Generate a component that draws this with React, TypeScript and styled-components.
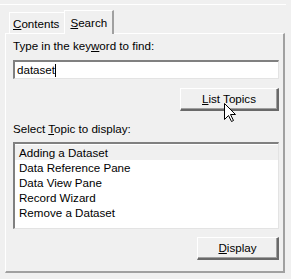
import React from "react";
import styled, { createGlobalStyle } from "styled-components";

const Global = createGlobalStyle`
  html, body { margin: 0; padding: 0; background: #f0f0f0; }
  body { font-family: "Liberation Sans", Arial, sans-serif; font-size: 11.6px; color: #000; }
`;

const Window = styled.div`
  width: 291px;
  height: 279px;
  background: #f0f0f0;
  padding-top: 4px;
  box-sizing: border-box;
  position: relative;
  overflow: hidden;
  font-family: "Liberation Sans", Arial, sans-serif;
  font-size: 11.6px;
`;

const TopLine = styled.div`
  height: 1px;
  background: #ffffff;
  width: 286px;
`;

const TabStrip = styled.div`
  display: flex;
  align-items: flex-end;
  height: 28px;
  padding-left: 9px;
  position: relative;
  z-index: 1;
`;

const Tab = styled.div<{ $active?: boolean }>`
  box-sizing: border-box;
  height: ${(p) => (p.$active ? "24px" : "21px")};
  margin-bottom: ${(p) => (p.$active ? "-1px" : "0")};
  padding: ${(p) => (p.$active ? "4px 5px 0 5px" : "3px 5px 0 3px")};
  margin-left: ${(p) => (p.$active ? "-2px" : "0")};
  background: #f0f0f0;
  border-top: 1px solid #ffffff;
  border-left: 1px solid #ffffff;
  border-right: 2px solid #a0a0a0;
  font-family: "Liberation Sans", Arial, sans-serif;
  font-size: 11.6px;
  line-height: 15px;
  white-space: nowrap;
`;

const Panel = styled.div`
  margin-left: 5px;
  width: 280px;
  height: 240px;
  box-sizing: border-box;
  border-top: 1px solid #ffffff;
  border-left: 1px solid #ffffff;
  border-right: 2px solid #a0a0a0;
  border-bottom: 2px solid #a0a0a0;
  padding: 5px 4px 0 7px;
  display: flex;
  flex-direction: column;
`;

const Label = styled.div<{ $mt?: number }>`
  font-size: 11.6px;
  line-height: 14px;
  margin-top: ${(p) => p.$mt ?? 0}px;
`;

const U = styled.span`
  text-decoration: underline;
  text-underline-offset: 1px;
`;

const Input = styled.div`
  margin-top: 7px;
  height: 19px;
  box-sizing: border-box;
  background: #fff;
  border-top: 2px solid #808080;
  border-left: 2px solid #808080;
  border-right: 1px solid #e3e3e3;
  border-bottom: 1px solid #e3e3e3;
  padding: 1px 2px;
  font-size: 11.6px;
  line-height: 14px;
  display: flex;
  align-items: center;
`;

const Caret = styled.span`
  display: inline-block;
  width: 1px;
  height: 13px;
  background: #000;
`;

const ButtonRow = styled.div<{ $mt: number }>`
  display: flex;
  justify-content: flex-end;
  margin-top: ${(p) => p.$mt}px;
  position: relative;
`;

const Button = styled.div<{ $w: number }>`
  width: ${(p) => p.$w}px;
  height: 23px;
  box-sizing: border-box;
  background: #f0f0f0;
  border-top: 1px solid #ffffff;
  border-left: 1px solid #ffffff;
  border-right: 2px solid #696969;
  border-bottom: 2px solid #696969;
  box-shadow: inset -1px -1px 0 #a0a0a0;
  display: flex;
  align-items: center;
  justify-content: center;
  font-size: 11.6px;
  line-height: 14px;
  padding-bottom: 1px;
`;

const Cursor = styled.svg`
  position: absolute;
  left: 211px;
  top: 15px;
`;

const ListBox = styled.div`
  margin-top: 6px;
  height: 87px;
  box-sizing: border-box;
  background: #fff;
  border-top: 2px solid #808080;
  border-left: 2px solid #808080;
  border-right: 1px solid #e3e3e3;
  border-bottom: 1px solid #e3e3e3;
  padding-top: 1px;
`;

const Item = styled.div<{ $sel?: boolean }>`
  height: 15px;
  line-height: 15px;
  padding-left: 4px;
  font-size: 11.6px;
  background: ${(p) => (p.$sel ? "#f0f0f0" : "transparent")};
`;

const items = [
  "Adding a Dataset",
  "Data Reference Pane",
  "Data View Pane",
  "Record Wizard",
  "Remove a Dataset",
];

export default function App() {
  return (
    <Window>
      <Global />
      <TopLine />
      <TabStrip>
        <Tab>
          <U>C</U>ontents
        </Tab>
        <Tab $active>
          <U>S</U>earch
        </Tab>
      </TabStrip>
      <Panel>
        <Label>
          Type in the key<U>w</U>ord to find:
        </Label>
        <Input>
          dataset
          <Caret />
        </Input>
        <ButtonRow $mt={9}>
          <Button $w={99}>
            <U>L</U>ist Topics
          </Button>
          <Cursor width="12" height="20" viewBox="0 0 12 20">
            <path
              d="M0.5 0.5 L0.5 16.5 L4.5 12.5 L7.5 18.5 L9.5 17.5 L6.5 11.5 L11.5 11.5 Z"
              fill="#fff"
              stroke="#000"
              strokeWidth="1"
            />
          </Cursor>
        </ButtonRow>
        <Label $mt={11}>
          Select <U>T</U>opic to display:
        </Label>
        <ListBox>
          {items.map((t, i) => (
            <Item key={t} $sel={i === 0}>
              {t}
            </Item>
          ))}
        </ListBox>
        <ButtonRow $mt={8}>
          <Button $w={82}>
            <U>D</U>isplay
          </Button>
        </ButtonRow>
      </Panel>
    </Window>
  );
}
